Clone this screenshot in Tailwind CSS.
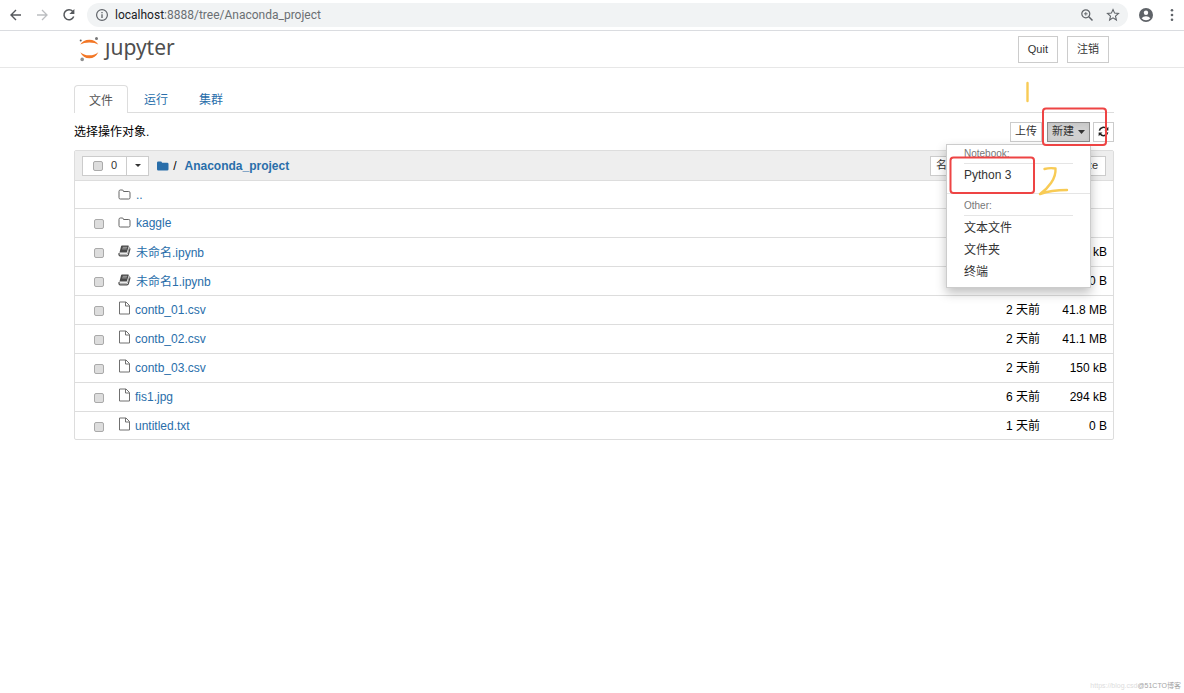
<!DOCTYPE html>
<html lang="zh-CN">
<head>
<meta charset="utf-8">
<title>Anaconda_project</title>
<script src="https://cdn.jsdelivr.net/npm/@tailwindcss/browser@4"></script>
</head>
<body class="relative flex min-h-screen flex-col bg-white font-['Liberation_Sans','Noto_Sans_CJK_SC',sans-serif] text-xs text-black">

<svg class="hidden" aria-hidden="true">
  <symbol id="folder" viewBox="0 0 13 12"><path d="M1 2.500Q1 1 2.300 1H4.200Q5.500 1 5.500 2.500H10.700Q12 2.500 12 3.800V8.700Q12 10 10.700 10H2.300Q1 10 1 8.700Z" fill="none" stroke="#666" stroke-width="1"/></symbol>
  <symbol id="file" viewBox="0 0 13 14"><path d="M1.500 1H8L11.500 4.500V13H1.500ZM7.500 1V5H11.500" fill="none" stroke="#707070" stroke-width="1" stroke-linejoin="round"/></symbol>
  <symbol id="book" viewBox="0 0 13 12"><path d="M4 .5H10.200Q11 .5 10.700 1.400L8.800 7.600H1.500L3 1.500Q3.200.5 4 .5Z" fill="#4a4a4a"/><path d="M4.700 2.300H9.200M4.200 3.900H8.700" stroke="#bbb" stroke-width=".8"/><path d="M1.400 7.700Q.5 9.300 2 9.300H8.700Q9.400 9.300 9.600 8.600L11.500 1.900" stroke="#888" stroke-width=".8" fill="none"/><path d="M1 8.200Q.7 10.800 2.300 10.800H9Q10 10.800 10.300 9.900L12.100 3.300" stroke="#4a4a4a" stroke-width="1.200" fill="none"/></symbol>
</svg>

<div class="flex h-[31px] items-center border-b border-[#dadce0] pl-2 pr-1 text-[#5f6368]">
  <button aria-label="Back" class="mr-[11px]"><svg class="size-4" viewBox="0 0 16 16" fill="none" stroke="#55585c" stroke-width="1.400"><path d="M13 8H3M8 3L3 8L8 13"/></svg></button>
  <button aria-label="Forward" class="mr-2.5"><svg class="size-4" viewBox="0 0 16 16" fill="none" stroke="#bcbec1" stroke-width="1.300"><path d="M2 8H12M7 3L12 8L7 13"/></svg></button>
  <button aria-label="Reload" class="mr-2.5"><svg class="size-4" viewBox="0 0 16 16"><path d="M11.800 4.500A5 5 0 1 0 12.700 9.500" fill="none" stroke="#55585c" stroke-width="1.500"/><path d="M13.400 2V7H8.400Z" fill="#55585c"/></svg></button>
  <div class="flex h-6 flex-1 items-center rounded-full bg-[#f1f3f4] px-2">
    <svg class="mr-1.5 size-3.5" viewBox="0 0 14 14"><circle cx="7" cy="7" r="5.400" fill="none" stroke="#5f6368" stroke-width="1.200"/><path d="M7 6.300V10M7 4V5.200" stroke="#5f6368" stroke-width="1.300"/></svg>
    <span class="flex-1 font-[Roboto,sans-serif] text-xs text-[#6b6f73]"><span class="text-[#202124]">localhost</span>:8888/tree/Anaconda_project</span>
    <button aria-label="Zoom" class="mr-3"><svg class="size-3.5" viewBox="0 0 14 14" fill="none" stroke="#5f6368"><circle cx="5.800" cy="5.800" r="4" stroke-width="1.200"/><path d="M8.800 8.800L12.500 12.500" stroke-width="1.500"/><path d="M5.800 4V7.600M4 5.800H7.600" stroke-width=".9"/></svg></button>
    <button aria-label="Bookmark"><svg class="size-3.5" viewBox="0 0 14 14"><path d="M7 1.500L8.600 5.100L12.500 5.500L9.500 8.100L10.400 12L7 9.900L3.600 12L4.500 8.100L1.500 5.500L5.400 5.100Z" fill="none" stroke="#5f6368" stroke-width="1.100"/></svg></button>
  </div>
  <button aria-label="Profile" class="ml-2.5 mr-2.5"><svg class="size-4" viewBox="0 0 16 16"><circle cx="8" cy="8" r="7" fill="#5f6368"/><circle cx="8" cy="5.700" r="2.200" fill="#fff"/><path d="M3.600 11.200Q5.200 9.200 8 9.200T12.400 11.200Q10.800 13.200 8 13.200T3.600 11.200Z" fill="#fff"/></svg></button>
  <button aria-label="Menu"><svg class="size-4" viewBox="0 0 16 16" fill="#5f6368"><circle cx="8" cy="3.200" r="1.300"/><circle cx="8" cy="8" r="1.300"/><circle cx="8" cy="12.800" r="1.300"/></svg></button>
</div>

<header class="flex h-[37px] items-center justify-between border-b border-[#e7e7e7] pl-[78px] pr-[75px]">
  <a href="#" class="flex items-center gap-[5px] text-[#4e4e4e]">
    <svg class="h-[26px] w-[22px]" viewBox="0 0 22 26"><path d="M2.300 8.600Q5.200 3.800 11.300 3.800T20.300 8.600Q17 6.600 11.300 6.600T2.300 8.600Z" fill="#f37726"/><path d="M2.300 16.200Q5.200 22.300 11.300 22.300T20.300 16.200Q17 19.300 11.300 19.300T2.300 16.200Z" fill="#f37726"/><circle cx="18.500" cy="2.500" r="1.500" fill="#767677"/><circle cx="2.700" cy="4.500" r="1" fill="#616262"/><circle cx="4.200" cy="23.400" r="1.800" fill="#8e8e8e"/></svg>
    <span class="pb-1 font-['Noto_Sans',sans-serif] text-[21px] leading-6">ȷupyter</span>
  </a>
  <div class="flex gap-[9px] text-[11px] text-[#333]">
    <button class="h-[27px] border border-[#ccc] px-[9px]">Quit</button>
    <button class="h-[27px] border border-[#ccc] px-[9px]">注销</button>
  </div>
</header>

<main class="pl-[74px] pr-[70px] pt-[17px]">
  <nav class="flex h-7 border-b border-[#ddd]">
    <a href="#" class="-mb-px flex items-center rounded-t-sm border border-b-0 border-[#ddd] bg-white px-3.5 pt-0.5 text-[#555]">文件</a>
    <a href="#" class="flex items-center px-4 pt-[3px] text-[#296eaa]">运行</a>
    <a href="#" class="flex items-center px-[15px] pt-[3px] text-[#296eaa]">集群</a>
  </nav>

  <div class="relative flex h-[37px] items-center justify-between">
    <span>选择操作对象.</span>
    <div class="flex h-5 gap-[3px] text-[11px] text-[#333]">
      <button class="mr-0.5 border border-[#ccc] bg-white px-1">上传</button>
      <button aria-expanded="true" class="flex items-center gap-1 border border-[#8c8c8c] bg-[#d0d0d0] px-1 shadow-inner">新建<svg class="h-1 w-[7px]" viewBox="0 0 7 4"><path d="M0 0H7L3.500 4Z" fill="#333"/></svg></button>
      <button aria-label="Refresh" class="flex items-center border border-[#ccc] bg-white px-1"><svg class="size-[11px]" viewBox="0 0 12 12"><path d="M1.500 5A4.500 4.500 0 0 1 9.500 3.200M10.500 7A4.500 4.500 0 0 1 2.500 8.800" fill="none" stroke="#222" stroke-width="1.700"/><path d="M11.300.8V5H7.100ZM.7 11.200V7H4.900Z" fill="#222"/></svg></button>
    </div>

    <div class="absolute right-[23px] top-[31px] z-10 w-[145px] border border-[#ccc] bg-white pb-1 pt-[3px] text-[#333] shadow-[0_5px_10px_rgba(0,0,0,0.25)]">
      <div class="mx-[17px] h-4 border-b border-[#e5e5e5] text-[10px] leading-[11px] text-[#777]">Notebook:</div>
      <a href="#" class="flex h-[22px] items-center px-[17px]">Python 3</a>
      <div class="mt-[7px] border-t border-[#e5e5e5]"></div>
      <div class="mx-[17px] flex h-[22px] items-center border-b border-[#e5e5e5] pt-0.5 text-[10px] text-[#777]">Other:</div>
      <a href="#" class="mt-px flex h-[22px] items-center px-[17px]">文本文件</a>
      <a href="#" class="flex h-[22px] items-center px-[17px]">文件夹</a>
      <a href="#" class="flex h-[22px] items-center px-[17px]">终端</a>
    </div>
  </div>

  <table class="w-full border-separate border-spacing-0 rounded-xs border border-[#ddd]">
    <thead>
      <tr class="h-[30px] bg-[#eee] text-left">
        <th colspan="3" class="border-b border-[#ddd] px-[7px] py-0 font-normal">
          <div class="flex items-center">
            <div class="flex h-5 border border-[#ccc] bg-white text-[11px] text-[#333]">
              <label class="flex items-center gap-2 px-2.5 pr-[9px]"><input type="checkbox" aria-label="全选" class="size-2.5 appearance-none rounded-xs border border-[#aaa] bg-[#ddd]">0</label>
              <button aria-label="选择" class="flex w-[22px] items-center justify-center border-l border-[#ccc]"><svg class="h-[3px] w-1.5" viewBox="0 0 6 3"><path d="M0 0H6L3 3Z" fill="#333"/></svg></button>
            </div>
            <a href="#" aria-label="根目录" class="ml-2"><svg class="h-2.5 w-3" viewBox="0 0 12 10"><path d="M0 1.800Q0 .5 1.300.5H3.700Q5 .5 5 1.800H10.200Q11.500 1.800 11.500 3V8.200Q11.500 9.500 10.200 9.500H1.300Q0 9.500 0 8.200Z" fill="#296eaa"/></svg></a>
            <span class="ml-1">/</span>
            <a href="#" class="ml-2 font-bold text-[#296eaa]">Anaconda_project</a>
            <div class="ml-auto flex h-5 w-[176px] justify-between text-[11px] text-[#333]">
              <button class="border border-[#ccc] bg-white px-[5px]">名字</button>
              <button class="w-[60px] border border-[#ccc] bg-white px-[7px] text-right">File size</button>
            </div>
          </div>
        </th>
      </tr>
    </thead>
    <tbody class="[&_a]:text-[#296eaa] [&_td]:border-b [&_td]:border-[#ddd] [&_td]:p-0 [&_tr:last-child_td]:border-b-0 [&_tr]:h-[29px] [&_input]:size-2.5 [&_input]:appearance-none [&_input]:rounded-xs [&_input]:border [&_input]:border-[#aaa] [&_input]:bg-[#ddd]">
      <tr class="!h-7"><td><div class="flex items-center gap-[5px] pl-[43px]"><svg class="h-3 w-[13px]"><use href="#folder"/></svg><a href="#">..</a></div></td><td></td><td></td></tr>
      <tr><td><div class="flex items-center gap-[5px] pl-[19px]"><input type="checkbox" aria-label="kaggle" class="mr-[9px] mt-0.5"><svg class="h-3 w-[13px]"><use href="#folder"/></svg><a href="#">kaggle</a></div></td><td></td><td></td></tr>
      <tr><td><div class="flex items-center gap-[5px] pl-[19px]"><input type="checkbox" aria-label="未命名.ipynb" class="mr-[9px] mt-0.5"><svg class="mb-0.5 h-3 w-[13px]"><use href="#book"/></svg><a href="#" class="pt-0.5">未命名.ipynb</a></div></td><td class="text-right">2 天前</td><td class="w-[73px] pr-1.5! text-right">1.2 kB</td></tr>
      <tr><td><div class="flex items-center gap-[5px] pl-[19px]"><input type="checkbox" aria-label="未命名1.ipynb" class="mr-[9px] mt-0.5"><svg class="mb-0.5 h-3 w-[13px]"><use href="#book"/></svg><a href="#" class="pt-0.5">未命名1.ipynb</a></div></td><td class="text-right">2 天前</td><td class="w-[73px] pr-1.5! text-right">720 B</td></tr>
      <tr><td><div class="flex items-center gap-1 pl-[19px]"><input type="checkbox" aria-label="contb_01.csv" class="mr-2.5 mt-0.5"><svg class="mb-1 h-3.5 w-[13px]"><use href="#file"/></svg><a href="#">contb_01.csv</a></div></td><td class="text-right">2 天前</td><td class="w-[73px] pr-1.5! text-right">41.8 MB</td></tr>
      <tr><td><div class="flex items-center gap-1 pl-[19px]"><input type="checkbox" aria-label="contb_02.csv" class="mr-2.5 mt-0.5"><svg class="mb-1 h-3.5 w-[13px]"><use href="#file"/></svg><a href="#">contb_02.csv</a></div></td><td class="text-right">2 天前</td><td class="w-[73px] pr-1.5! text-right">41.1 MB</td></tr>
      <tr><td><div class="flex items-center gap-1 pl-[19px]"><input type="checkbox" aria-label="contb_03.csv" class="mr-2.5 mt-0.5"><svg class="mb-1 h-3.5 w-[13px]"><use href="#file"/></svg><a href="#">contb_03.csv</a></div></td><td class="text-right">2 天前</td><td class="w-[73px] pr-1.5! text-right">150 kB</td></tr>
      <tr><td><div class="flex items-center gap-1 pl-[19px]"><input type="checkbox" aria-label="fis1.jpg" class="mr-2.5 mt-0.5"><svg class="mb-1 h-3.5 w-[13px]"><use href="#file"/></svg><a href="#">fis1.jpg</a></div></td><td class="text-right">6 天前</td><td class="w-[73px] pr-1.5! text-right">294 kB</td></tr>
      <tr class="!h-[27px]"><td><div class="flex items-center gap-1 pl-[19px]"><input type="checkbox" aria-label="untitled.txt" class="mr-2.5 mt-0.5"><svg class="mb-1 h-3.5 w-[13px]"><use href="#file"/></svg><a href="#">untitled.txt</a></div></td><td class="text-right">1 天前</td><td class="w-[73px] pr-1.5! text-right">0 B</td></tr>
    </tbody>
  </table>
</main>

<!-- Hand-drawn step markers -->
<svg class="pointer-events-none absolute right-0 top-0 z-20 h-[200px] w-[264px]" viewBox="0 0 264 200" fill="none" stroke-linecap="round" stroke-linejoin="round" aria-hidden="true">
  <g stroke="#ee4444" stroke-width="2"><rect x="123" y="108.500" width="63" height="36.500" rx="3"/><rect x="30.500" y="157.500" width="83.500" height="35.500" rx="3"/></g>
  <g stroke="#f8cb55" stroke-width="2.400"><path d="M107.500 83V101"/><path d="M124.500 169Q130 167.500 135.500 168.500Q136 176 131 183Q127 189 120 194Q131 190 147 190"/></g>
</svg>

<footer class="mt-auto flex justify-end pb-[3px] pr-[3px] text-[7px] leading-[9px] text-[#ddd]"><span>https://blog.csd</span><span class="text-[#a5a5a5]">@51CTO博客</span></footer>
</body>
</html>
